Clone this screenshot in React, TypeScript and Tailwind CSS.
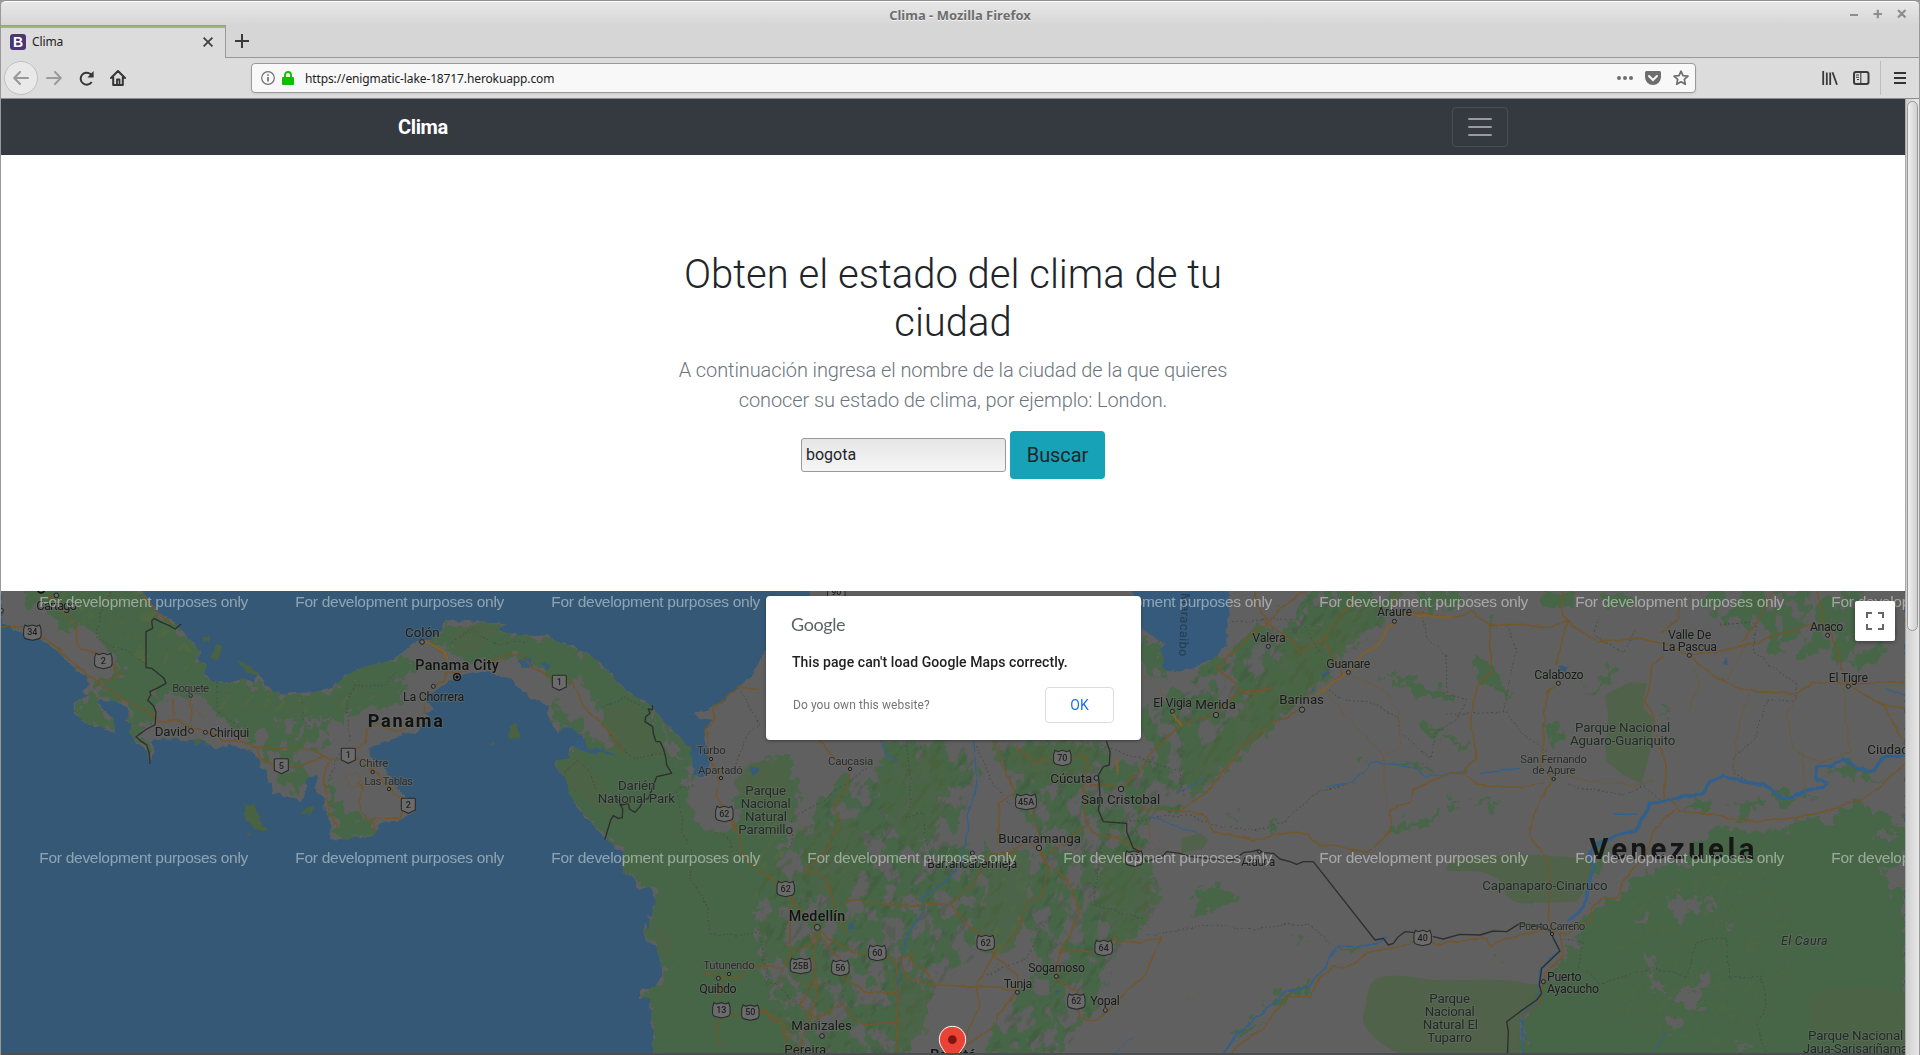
import React from "react";

type Label = [text: string, cx: number, cy: number, width: number, size: number, tone?: "soft" | "bold" | "park" | "italic"];

/* Map units are a third of a pixel; every region has its own local origin. */
const REGION_X = [0, 1200, 2280, 3420, 4560];

const LABELS: Label[][] = [
  [
    ["Cartago", 170, 61, 122, 14],
    ["Boquete", 572, 309, 110, 12, "soft"],
    ["David", 513, 438, 98, 14],
    ["Chiriqui", 688, 442, 120, 13],
    ["Colón", 1267, 141, 104, 14],
    ["Panama City", 1371, 241, 250, 15, "bold"],
    ["La Chorrera", 1301, 334, 184, 13],
    ["Panama", 1216, 407, 226, 19, "bold"],
    ["Chitre", 1121, 534, 88, 12, "soft"],
    ["Las Tablas", 1166, 588, 146, 12, "soft"],
  ],
  [
    ["Turbo", 934, 496, 86, 12, "soft"],
    ["Apartadó", 961, 556, 134, 12, "soft"],
    ["Caucasia", 1352, 528, 136, 12, "soft"],
    ["Darién", 710, 601, 112, 14, "park"],
    ["National Park", 709, 640, 232, 14, "park"],
    ["Parque", 1097, 616, 122, 14, "park"],
    ["Nacional", 1097, 655, 150, 14, "park"],
    ["Natural", 1098, 694, 126, 14, "park"],
    ["Paramillo", 1097, 733, 164, 14, "park"],
    ["Medellín", 1251, 994, 170, 15, "bold"],
    ["Tutunendo", 987, 1140, 154, 12, "soft"],
    ["Quibdo", 954, 1210, 112, 13],
    ["Manizales", 1265, 1321, 182, 14],
    ["Pereira", 1216, 1393, 126, 14],
  ],
  [
    ["Cúcuta", 934, 580, 126, 14],
    ["San Cristobal", 1082, 642, 238, 14],
    ["Bucaramanga", 839, 760, 248, 14],
    ["Barrancabermeja", 637, 835, 270, 13],
    ["Sogamoso", 890, 1147, 170, 13],
    ["Tunja", 774, 1195, 86, 13],
    ["Yopal", 1035, 1248, 88, 13],
    ["Bogotá", 579, 1408, 138, 16, "bold"],
  ],
  [
    ["Araure", 764, 81, 104, 12.5],
    ["Valera", 387, 157, 100, 13],
    ["Guanare", 625, 235, 132, 13],
    ["El Vigia", 98, 352, 116, 13],
    ["Merida", 227, 358, 122, 14],
    ["Barinas", 485, 343, 134, 14],
    ["Arauca", 355, 829, 102, 12.5],
    ["Capanaparo-Cinaruco", 1215, 901, 376, 14, "park"],
    ["Parque", 929, 1240, 122, 14, "park"],
    ["Nacional", 929, 1279, 150, 14, "park"],
    ["Natural El", 931, 1318, 166, 14, "park"],
    ["Tuparro", 929, 1357, 134, 14, "park"],
  ],
  [
    ["Valle De", 509, 148, 130, 13],
    ["La Pascua", 509, 184, 164, 13],
    ["Anaco", 920, 124, 100, 13],
    ["Calabozo", 117, 268, 148, 13],
    ["El Tigre", 985, 277, 118, 13],
    ["Parque Nacional", 308, 427, 286, 14, "park"],
    ["Aguaro-Guariquito", 308, 466, 316, 14, "park"],
    ["San Fernando", 101, 522, 200, 12, "soft"],
    ["de Apure", 102, 555, 130, 12, "soft"],
    ["Ciudad", 1104, 492, 124, 14],
    ["Puerto Carreño", 96, 1023, 200, 12, "soft"],
    ["Puerto", 133, 1174, 104, 13],
    ["Ayacucho", 159, 1210, 156, 13],
    ["El Caura", 853, 1068, 140, 13, "italic"],
    ["Parque Nacional", 1007, 1351, 286, 14, "park"],
    ["Jaua-Sarisariñama", 1006, 1390, 316, 14, "park"],
  ],
];

const TOWNS: [number, number, number?][][] = [
  [[169, 31], [572, 332, 5], [573, 438], [616, 442, 6], [1266, 171], [1300, 304, 6], [1118, 561, 5], [1167, 612, 5], [3, 77, 7]],
  [[933, 522, 5], [963, 579, 5], [1350, 552, 5], [1252, 1027, 9], [987, 1167, 5], [955, 1180, 6], [1266, 1353]],
  [[1009, 579], [1083, 612, 8], [837, 789, 8], [637, 804, 6], [889, 1174, 6], [772, 1222, 6], [1036, 1276, 6]],
  [[763, 109, 6], [385, 184, 6], [625, 262, 6], [97, 379, 6], [228, 390, 8], [486, 374, 8], [358, 800, 5]],
  [[508, 211, 6], [923, 151, 6], [115, 295, 6], [985, 304, 6], [101, 582, 5], [96, 1047, 5], [70, 1190, 6]],
];

const SHIELDS: [string, number, number, "us" | "pa"][][] = [
  [["34", 97, 142, "us"], ["2", 310, 227, "us"], ["1", 1045, 511, "pa"], ["5", 844, 542, "pa"], ["2", 1225, 661, "pa"]],
  [["1", 478, 292, "pa"], ["62", 973, 686, "us"], ["62", 1157, 911, "us"], ["90", 1309, 20, "us"], ["25B", 1202, 1142, "us"], ["56", 1321, 1148, "us"], ["13", 964, 1275, "us"], ["50", 1051, 1282, "us"]],
  [["70", 907, 518, "us"], ["45A", 798, 650, "us"], ["60", 352, 1103, "us"], ["62", 677, 1073, "us"], ["64", 1031, 1088, "us"], ["62", 949, 1249, "us"], ["66", 1122, 820, "us"]],
  [["40", 848, 1058, "us"]],
  [],
];

const LAND =
  "M3,0 L415,0 L475,85 L520,110 L560,150 L600,200 L590,225 L622,240 L610,270 L640,292 L700,290 L730,280 L760,290 L775,270 L790,290 L820,320 L870,328 L930,325 L1000,305 L1040,270 L1090,245 L1160,230 L1210,205 L1240,175 L1265,165 L1290,165 L1320,145 L1335,105 L1360,100 L1370,110 L1400,108 L1440,112 L1520,118 L1490,138 L1560,150 L1640,155 L1700,180 L1760,205 L1820,245 L1850,290 L1890,325 L1930,350 L1955,362 L1990,410 L2030,445 L2060,480 L2075,485 L2075,510 L2085,530 L2080,570 L2110,575 L2130,560 L2130,530 L2120,480 L2110,440 L2140,405 L2100,400 L2080,390 L2130,370 L2170,350 L2220,305 L2250,280 L2280,235 L2295,200 L2400,100 L2440,0 L5715,0 L5715,1420 L1960,1420 L1952,1270 L1950,1240 L1918,1235 L1930,1205 L1965,1205 L1990,1165 L1985,1140 L1965,1080 L1945,1070 L1930,1040 L1932,1020 L1950,1040 L1945,990 L1955,990 L1968,945 L1950,905 L1915,915 L1900,870 L1870,865 L1870,800 L1815,760 L1775,715 L1740,675 L1710,630 L1700,590 L1670,545 L1668,525 L1710,520 L1705,490 L1730,475 L1745,455 L1730,440 L1715,430 L1690,418 L1680,450 L1650,410 L1645,360 L1600,345 L1570,320 L1540,290 L1490,268 L1440,262 L1380,272 L1365,285 L1335,295 L1310,315 L1280,325 L1275,350 L1310,380 L1270,385 L1290,400 L1245,440 L1175,462 L1125,480 L1108,490 L1110,515 L1150,545 L1180,590 L1215,635 L1245,680 L1200,705 L1140,715 L1125,750 L1060,760 L1005,767 L988,750 L995,720 L975,680 L970,640 L945,610 L950,575 L935,572 L915,590 L920,610 L905,652 L880,640 L825,625 L805,590 L800,555 L780,545 L765,505 L720,490 L690,480 L650,490 L600,465 L550,470 L500,460 L460,470 L455,530 L445,535 L440,495 L410,470 L385,440 L400,420 L375,410 L385,395 L380,360 L330,345 L290,350 L305,375 L340,400 L345,440 L300,425 L265,420 L225,385 L225,355 L265,330 L250,320 L270,290 L230,260 L180,205 L130,165 L70,145 L3,122 Z";

/* Regions that are covered by forest from edge to edge. */
const FOREST = [
  "M60,0 L415,0 L475,85 L520,110 L560,150 L600,200 L590,225 L622,240 L640,292 L730,280 L820,320 L930,325 L1000,305 L1090,245 L1210,205 L1240,225 L1210,290 L1195,360 L1080,375 L1030,400 L960,400 L880,405 L820,400 L780,450 L760,480 L720,440 L640,370 L600,330 L470,330 L450,350 L460,400 L400,370 L300,285 L260,290 L330,280 L370,260 L300,160 L230,110 L200,150 L150,90 L90,60 Z",
  "M225,355 L265,330 L300,330 L290,350 L310,380 L340,405 L343,438 L300,425 L265,420 L225,385 Z",
  "M390,290 L460,340 L465,380 L440,420 L420,440 L450,490 L450,525 L440,495 L410,470 L385,440 L400,420 L380,360 L300,345 L290,300 Z",
  "M1290,165 L1335,120 L1440,112 L1520,118 L1490,138 L1640,155 L1760,205 L1850,290 L1955,362 L2030,445 L2075,485 L2085,530 L2050,600 L2065,650 L2160,700 L2200,740 L2210,640 L2220,600 L2260,540 L2340,515 L2370,520 L2380,570 L2400,640 L2350,780 L2310,900 L2260,1000 L2280,1130 L2330,1250 L2410,1420 L1960,1420 L1952,1270 L1918,1235 L1965,1205 L1990,1165 L1965,1080 L1930,1040 L1945,990 L1968,945 L1950,905 L1915,915 L1900,870 L1870,865 L1870,800 L1775,715 L1710,630 L1700,590 L1668,545 L1668,525 L1710,520 L1730,475 L1760,440 L1800,470 L1840,500 L1850,450 L1800,390 L1770,330 L1740,280 L1700,300 L1600,250 L1540,210 L1460,240 L1340,200 Z",
  "M990,590 L1010,640 L1050,690 L1120,705 L1125,750 L1060,760 L1005,767 L988,750 L1010,710 L980,640 Z",
  "M5715,720 L5560,640 L5520,690 L5420,700 L5350,720 L5240,750 L5160,720 L5120,740 L5050,830 L4940,870 L4880,900 L4830,950 L4760,990 L4730,1060 L4680,1150 L4620,1200 L4570,1300 L4565,1420 L5715,1420 L5715,850 Z",
];

/* Mountain country where forest and bare ground alternate. */
const HIGHLANDS = [
  "M2330,1420 L2270,1130 L2260,900 L2380,740 L2460,650 L2500,600 L2640,560 L2640,470 L2880,470 L2930,560 L2890,640 L2860,770 L2980,800 L3000,960 L2940,1080 L2820,1180 L2750,1300 L2700,1420 Z",
  "M2980,470 L3320,470 L3340,540 L3420,540 L3500,620 L3430,700 L3440,820 L3470,920 L3420,1030 L3340,1080 L3300,1240 L3150,1420 L2950,1420 L2990,1300 L3130,1150 L3060,1000 L3110,850 L3100,700 L3020,600 Z",
  "M3440,500 L3400,380 L3500,330 L3600,250 L3700,190 L3780,120 L3880,60 L3940,0 L4200,0 L4170,90 L4030,200 L3900,330 L3800,420 L3690,500 L3600,600 L3500,680 L3420,640 Z",
  "M2660,470 L2820,470 L2880,560 L2820,720 L2760,840 L2680,800 L2620,660 L2660,600 Z",
  "M800,400 L980,395 L1000,470 L900,500 L930,560 L900,620 L820,600 L780,500 Z",
  "M1640,350 L1760,400 L1730,460 L1680,440 Z",
  "M5080,18 L5560,18 L5700,60 L5640,240 L5300,200 L5230,120 L5100,60 Z",
];

const DENSE_RIDGES = [
  "M2930,1050 L2980,820 L3070,780 L3100,900 L3060,1060 L2980,1130 Z",
  "M3300,780 L3440,820 L3475,930 L3420,1030 L3340,1080 L3300,960 Z",
  "M3540,560 L3700,420 L3800,260 L3900,150 L4040,60 L4150,60 L4100,130 L3960,290 L3850,390 L3730,500 L3580,640 Z",
  "M2640,560 L2700,500 L2820,500 L2860,580 L2800,740 L2720,790 L2650,690 Z",
  "M3020,480 L3290,480 L3280,560 L3130,600 L3050,560 Z",
  "M2440,720 L2560,700 L2600,800 L2560,920 L2460,940 L2400,860 Z",
  "M2700,1180 L2800,1220 L2780,1330 L2720,1400 L2660,1380 Z",
];

const PARKS = [
  "M4942,295 L4890,292 L4815,330 L4825,400 L4815,470 L4820,530 L4870,570 L4925,595 L4950,500 L4960,400 L4930,370 L4930,340 Z",
  "M4125,1185 C4160,1160 4240,1178 4300,1185 C4400,1190 4500,1175 4580,1195 L4620,1200 L4600,1260 L4560,1300 L4560,1420 L4240,1420 C4140,1390 4080,1330 4090,1290 C4105,1240 4100,1200 4125,1185 Z",
  "M4340,850 C4350,815 4400,820 4560,808 L4770,820 L4780,860 L4765,900 L4730,950 L4560,955 C4500,940 4520,900 4490,880 C4450,850 4400,860 4340,858 Z",
  "M3545,760 L3600,745 L3625,765 L3610,790 L3545,805 Z",
  "M5430,1230 C5500,1200 5600,1200 5715,1220 L5715,1420 L5480,1360 C5420,1330 5420,1280 5430,1230 Z",
  "M1360,140 L1440,112 L1490,138 L1420,200 L1370,215 Z",
  "M2200,590 L2250,535 L2360,520 L2370,640 L2350,720 L2260,700 Z",
  "M1690,540 L1740,510 L1830,620 L1850,700 L1760,640 L1700,600 Z",
  "M1810,380 L1900,350 L1960,440 L1990,520 L1900,520 L1830,470 Z",
  "M1960,1000 L2010,1050 L2020,1100 L1980,1120 Z",
];

const WATER = [
  "M3395,0 L3685,0 L3690,75 L3680,110 L3682,185 L3625,225 L3580,250 L3525,262 L3495,250 L3490,215 L3480,190 L3495,175 L3460,160 L3420,120 Z",
  "M2070,500 L2100,500 L2135,530 L2128,570 L2085,570 Z",
  "M1555,225 L1590,215 L1600,245 L1570,245 Z M1615,235 L1655,240 L1640,255 Z",
  "M3965,265 L3995,255 L3970,285 Z M3930,305 L3945,320 L3930,320 Z",
  "M4680,235 L4702,245 L4695,265 L4680,255 Z M5165,235 L5182,220 L5178,238 Z",
  "M2545,1012 L2560,1015 L2562,1035 L2547,1035 Z M3162,1215 L3180,1212 L3172,1230 Z",
  "M1720,480 L1745,450 L1760,490 L1800,490 L1860,520 L1800,500 L1750,500 Z",
  "M2250,545 L2280,550 L2258,575 Z",
];

const ISLANDS = [
  "M728,685 L740,660 L762,650 L768,680 L778,695 L770,705 L802,725 L800,735 L765,725 L735,705 Z",
  "M905,685 L925,670 L950,663 L935,678 L910,688 Z",
  "M1525,425 L1550,418 L1555,455 L1530,470 L1522,450 Z",
  "M605,155 L625,155 L628,170 L610,168 Z M650,180 L665,185 L655,225 L635,215 Z",
  "M712,225 L735,235 L770,260 L780,275 L740,262 L715,240 Z",
  "M742,745 L752,745 L747,757 Z M1478,470 L1487,468 L1482,485 Z",
  "M580,462 L600,460 L602,475 L588,482 Z M615,470 L628,475 L620,488 Z",
];

const ROADS = [
  "M3,125 L70,125 L130,160 L190,205 L235,245 L280,280 L350,330 L410,365 L440,370 L475,410 L530,402 L570,425 L640,445 L670,468 L720,468 L770,487 L830,490 L900,487 L950,500 L985,525 L1025,520 L1070,490 L1095,475 L1100,430 L1130,415 L1190,440 L1240,420",
  "M1300,305 L1335,290 L1335,265 L1400,262 M1280,170 L1310,190 L1340,215 M1275,320 L1270,385 M770,487 L780,520 L830,545 L890,547 L930,530 L970,515",
  "M430,30 L475,85 L510,115 M150,30 L185,80 L225,115 L230,170 L250,195 L330,215 L358,270 L330,285 L300,285 M570,340 L575,430 M520,340 L520,390",
  "M1070,520 L1130,565 L1180,625 L1210,640 L1205,700 L1130,700 L1120,712 L1085,680 L1075,650 L1090,615 L1075,590 M1120,712 L1125,745 M985,525 L970,580 L985,680 L1010,725",
  "M1470,232 L1510,210 L1560,210 L1600,250 L1660,278 L1720,292 L1740,330 L1750,365 L1790,400 L1830,440 L1850,475 L1870,505",
  "M2280,312 L2220,303 L2140,370 L2140,410 L2118,430 L2130,520 L2160,560 L2148,635 L2190,700 L2220,760 L2220,800 L2265,850 L2330,890 L2370,930 L2385,960",
  "M2460,465 L2500,520 L2548,550 L2545,610 L2500,660 L2520,710 L2480,800 L2420,850 L2475,875 L2500,960 L2540,1040",
  "M2385,960 L2440,1010 L2480,1060 L2560,1100 L2650,1110 L2690,1130 L2690,1250 L2690,1420",
  "M2240,1137 L2345,1150 L2375,1100 L2430,1080 L2452,1030 M2110,1165 L2220,1180 L2240,1137 M2370,940 L2370,1100",
  "M2452,1050 L2440,1100 L2450,1240 L2430,1300 L2390,1420 M2452,1050 L2520,1120 L2530,1180 L2600,1220 L2690,1220 L2700,1240",
  "M2530,960 L2560,946 L2700,962 L2850,955 L2920,900 L2970,810 L3040,800 L3080,770 L3115,790 L3150,850 L3120,940 L3080,950 L3055,1040 L2980,1110 L2930,1200 M2850,955 L2900,1020 L2960,1060 L2980,1110 L3050,1170 L3052,1220",
  "M2980,470 L2990,500 L3045,620 L3000,650 L2995,780 M3050,480 L3100,530 L3160,520 L3250,510 L3270,540 L3250,600 L3260,720 L3200,770 L3150,800",
  "M3095,670 L3120,780 L3150,850 L3200,880 L3240,980 L3210,1050 L3180,1100 L3165,1180 L3230,1220 L3240,1300 L3290,1310 L3400,1200 L3440,1160 L3485,1055 L3420,1075 L3340,1060 L3290,1100 L3180,1100",
  "M3260,720 L3290,750 L3360,760 L3420,800 M3270,600 L3330,600 L3363,612 L3420,560 L3450,510 L3540,420 L3650,385 L3720,320 L3810,310",
  "M2280,1280 L2340,1300 L2370,1360 M2720,1180 L2820,1200 L2900,1205 L2980,1205 L3050,1222 L2995,1290 L2990,1320 L2900,1380 L2860,1420 M2930,1210 L2940,1260 L2900,1350 L2850,1370",
  "M2440,1180 L2400,1260 L2450,1300 L2520,1260 L2590,1320 L2700,1310 M2730,1120 L2790,1170 L2800,1200 M2720,1180 L2700,1120 L2740,1110",
  "M3540,675 L3620,620 L3680,550 L3730,480 L3800,425 L3905,374 M3420,672 L3540,675 L3610,690 L3640,740 L3760,765 L3870,742 L3930,752 L3960,782 L4010,780 L4100,803 L4130,780 L4170,740 L4172,672 L4230,655 L4240,615 L4350,562 L4390,567 L4430,597 L4500,607 L4560,605 L4630,595",
  "M3805,310 L3740,330 L3700,290 L3650,250 L3740,160 L3800,120 L3870,160 L3900,200 L3970,160 L4000,215 L4030,265 L4000,290 M3800,120 L3850,60 L3920,20 M3760,18 L3800,120 M3970,160 L4030,90 L4070,18",
  "M4183,60 L4190,18 M4240,80 L4360,95 L4420,80 L4470,120 L4560,118 L4640,128 L4700,110 L4790,168 L4920,160 L5000,180 L5070,212",
  "M4470,120 L4475,260 L4430,300 L4420,350 L4415,420 L4430,520 L4410,535 L4390,567 M4700,110 L4680,60 L4690,18",
  "M4700,110 L4670,240 M4675,295 L4640,320 L4630,450 L4625,540 L4655,590 L4620,640 L4585,750 L4640,820 L4650,880 L4645,1000 L4660,1045",
  "M5070,212 L5180,195 L5270,175 L5350,140 L5440,120 M5070,212 L5110,250 L5180,295 L5260,320 L5390,325 L5440,295 L5545,292 L5715,295 M4990,210 L4955,240 L4950,300 L4930,350 L4960,390 L4970,450 L4998,540 L4993,640",
  "M5455,20 L5470,110 L5500,160 L5515,220 L5545,300 L5650,360 L5715,370 M5650,360 L5715,475 M5715,530 L5650,600 L5590,640 L5520,665 L5440,690 L5370,700 L5280,710 L5200,700 L5120,685 L5040,680 L5015,650",
  "M5025,670 L4960,740 L4940,800 L4870,890 L4855,935 L4810,940 L4775,970 L4770,1010 L4700,1045 L4680,1045 L4690,1110 L4640,1160 L4620,1240 L4570,1300",
  "M4680,1035 L4600,1040 L4520,1060 L4470,1085 L4460,1060 L4380,1065 L4320,1080 L4270,1062 L4200,1085 L4110,1100 L4040,1150 L4000,1145 L3960,1180 L3930,1235 L3860,1235 L3790,1330 L3710,1380 L3690,1420",
  "M2165,1190 L2160,1230 M2165,1290 L2145,1330 L2160,1380 M2164,1290 L2250,1290 L2290,1275 L2340,1320 L2380,1420",
  "M4980,140 L5030,110 L5040,60 M5230,170 L5280,90 L5320,18",
];

const SIDE_ROADS = [
  "M3980,320 L4060,420 L4150,510 L4200,490 L4195,380 L4150,310 L4050,270 M4150,510 L4160,670",
  "M5245,325 L5210,460 L5200,580 M5390,330 L5360,390 L5380,490 L5410,520 L5415,620 M5085,250 L5095,300 L5065,380",
  "M5530,310 L5540,420 L5550,500 L5470,530 L5400,510 M5240,175 L5190,270 L5170,290 M4700,570 L4770,590 L4900,600 L4960,590",
  "M3440,680 L3450,760 L3480,800 M3400,320 L3440,270 L3500,340 M560,360 L620,400 M1040,570 L1070,560 L1090,600 L1050,605 Z M2400,1180 L2470,1230",
];

const RIVERS: [string, number][] = [
  ["M5715,510 L5650,515 L5620,560 L5580,555 L5530,525 L5490,545 L5450,545 L5450,585 L5480,595 L5470,610 L5420,615 L5380,640 L5350,640 L5290,600 L5220,588 L5170,575 L5130,590 L5100,630 L5020,640 L4990,650 L4950,655 L4930,690 L4910,735 L4840,755 L4790,780", 10],
  ["M4790,770 L4770,800 L4780,850 L4765,900 L4750,970 L4705,1010", 8],
  ["M2920,430 L2930,600 L2905,690 L2900,780 L2870,860 L2770,940 L2765,990 L2725,1040 L2700,1150 L2690,1260", 4],
  ["M3540,625 L3610,575 M3980,605 L4060,590 L4120,530 L4240,545 L4280,575 L4350,565 L4400,560 M4440,565 L4560,550 M3440,690 L3520,720 L3590,745", 3.5],
  ["M3660,1420 L3710,1350 L3790,1280 L3860,1220 L3930,1205 L3980,1140 L4010,1085 L4100,1085 L4160,1060", 5],
  ["M4660,1060 L4680,1095 L4620,1150 L4615,1240 L4570,1290 L4565,1400 M4560,1300 L4580,1360 M2640,460 L2660,510 L2690,530 M4840,688 L4910,688", 4.5],
  ["M5660,315 L5715,330 M4960,1400 L5000,1345 M3320,1420 L3400,1360", 3],
];

const BORDERS =
  "M543,118 L525,132 L508,122 L480,110 L462,100 L455,108 L458,130 L438,140 L438,248 L455,250 L480,270 L492,280 L498,295 L475,308 L450,320 L452,330 L443,345 L460,362 L468,380 L465,420 L440,432 L408,455 L425,470 L440,480 L448,505 L450,535 " +
  "M1957,362 L1958,374 L1945,372 L1950,385 L1937,395 L1935,410 L1958,425 L1960,445 L1968,470 L1980,470 L1990,490 L1998,520 L2000,540 L2015,565 L1970,575 L1955,615 L1945,640 L1930,645 L1920,665 L1905,682 L1888,672 L1885,655 L1865,660 L1850,640 L1868,672 L1867,698 L1855,700 L1840,692 L1832,705 L1815,762 " +
  "M3320,470 L3330,500 L3328,540 L3310,545 L3295,570 L3298,600 L3300,640 L3295,675 L3310,710 L3380,715 L3380,740 L3400,790 L3420,800 L3440,830 L3490,812 L3500,800 L3540,805 L3570,815 L3640,822 L3700,825 L3732,802 L3755,800 L3775,795 L3790,803 L3820,805 L3840,822 L3870,830 L3890,838 L3910,830 L3940,830 L4125,1065 L4150,1060 L4165,1080 L4180,1075 L4195,1055 L4215,1040 L4270,1045 M4300,1055 L4330,1062 L4380,1048 L4440,1050 L4480,1038 L4520,1040 L4560,1015 L4600,1020 L4650,1035 L4660,1060 L4680,1098 L4625,1150 L4618,1200 L4625,1225 L4610,1245 L4560,1280 L4520,1310 L4525,1340 L4522,1420";

const DOTTED =
  "M330,18 L300,90 L290,160 L380,200 L440,240 M650,290 L655,380 L740,450 M905,330 L910,400 L930,430 M1060,300 L1040,350 L1050,460 L1010,520 L990,580 M1190,260 L1150,300 L1060,300 M1355,170 L1420,130 L1450,160 L1500,180 L1580,168 " +
  "M2080,600 L2030,610 L2050,740 L2075,800 L2070,880 L2120,960 L2130,1050 L2280,1045 L2300,1180 L2400,1260 M1690,560 L1730,525 L1770,560 L1790,620 M1810,370 L1870,335 L1940,370 M1830,450 L1900,520 L2000,505 " +
  "M2200,560 L2240,450 L2280,420 L2225,320 M2150,740 L2190,760 L2195,800 M2720,470 L2735,640 L2720,700 L2770,680 L2780,790 M2600,550 L2480,640 L2380,700 L2370,790 M2930,480 L2980,600 L3030,660 M3330,720 L3440,700 L3560,690 L3640,720 L3770,740 L3860,705 L3900,660 L3960,620 L4060,590 " +
  "M3440,1050 L3520,1040 L3640,1018 L3760,1035 L3860,1018 L3930,1018 L3990,1075 M4270,80 L4280,160 L4340,210 L4340,330 L4400,340 L4370,400 L4310,440 L4290,520 L4200,440 L4195,400 L4110,350 L4030,345 L3980,310 M4340,390 L4520,380 L4560,440 L4640,500 M4520,120 L4550,200 L4510,380 M4800,90 L4780,150 L4870,200 L4910,130 M5160,120 L5270,110 L5260,200 L5390,300 L5380,350 L5300,340 L5270,450 L5200,520 L5205,570 L5250,590 " +
  "M4700,600 L4870,630 L4930,600 L4990,650 M4760,1160 L4800,1195 L4960,1150 L5060,1175 L5090,1070 L5180,1060 L5190,1180 L5280,1170 L5300,1260 L5270,1320 L5300,1420 M4680,1060 L4750,1070 L4740,1150 M3300,480 L3540,560 L3550,640 M3430,1000 L3280,960 L3300,780 M2960,1170 L3080,1120 L3140,1000 M3700,110 L3900,100 L3960,200";

const PATCHES =
  "M4150,270 L4220,275 L4300,310 L4350,315 L4370,345 L4310,350 L4240,325 L4190,300 Z M4400,200 L4460,230 L4500,280 L4540,340 L4490,320 L4450,290 Z M4260,425 L4310,420 L4340,440 L4320,455 L4280,450 Z M4340,460 L4410,480 L4400,490 L4350,475 Z M4070,515 L4110,508 L4095,535 L4075,530 Z M4200,525 L4260,535 L4300,555 L4270,565 Z M3680,700 L3720,690 L3720,705 L3685,708 Z M3810,710 L3840,705 L3835,725 L3812,732 Z M4180,715 L4230,715 L4320,685 L4300,715 L4200,740 L4160,750 Z M4420,655 L4490,640 L4480,670 L4430,660 Z M4340,650 L4390,645 L4370,665 Z M3590,900 L3680,910 L3720,940 L3620,980 L3580,990 Z M3580,940 L3640,945 L3600,970 Z M4470,110 L4475,150 L4480,100 Z M4640,400 L4690,440 L4670,480 L4640,460 Z M4740,315 L4800,310 L4810,260 L4850,235 L4830,290 L4790,320 Z M4990,370 L5010,360 L4990,420 Z M5500,550 L5560,540 L5650,580 L5520,570 Z M5040,660 L5100,640 L5150,650 L5100,680 Z M5310,610 L5400,640 L5460,630 L5350,670 Z M4790,760 L4830,780 L4800,870 L4780,880 Z M4550,930 L4600,925 L4580,960 Z M4490,1110 L4497,1110 L4490,1140 Z M3880,1062 L3930,1065 L3890,1072 Z M3550,1245 L3580,1255 L3560,1255 Z M4000,1080 L4110,1090 L4060,1100 Z M3780,1270 L3860,1215 L3940,1200 L3870,1240 Z M3700,1350 L3780,1300 L3720,1370 Z M5200,650 L5290,640 L5220,720 Z M3430,160 L3480,190 L3510,270 L3440,250 L3390,200 Z M4250,20 L4400,18 L4380,60 L4280,70 Z M4620,20 L4700,18 L4720,60 L4640,70 Z M4800,30 L4880,20 L4900,60 L4830,70 Z";

const CLEARINGS =
  "M4995,930 L5040,925 L5050,960 L5110,935 L5090,990 L5060,970 L5040,1015 Z M4900,1000 L4955,998 L4950,1015 L4900,1010 Z M4940,1150 L4990,1190 L4980,1230 L4940,1190 Z M5020,1230 L5090,1200 L5130,1145 L5120,1230 L5080,1280 L5030,1260 Z M4990,1290 L5050,1300 L5010,1340 Z M5190,1010 L5205,1015 L5205,1035 Z M4940,1100 L4965,1110 L4960,1155 Z M5120,940 L5140,930 L5135,990 Z M5260,720 L5360,710 L5360,740 L5290,735 Z M5440,690 L5510,690 L5480,720 Z M5650,840 L5715,830 L5715,900 L5670,930 Z M5210,1360 L5235,1380 L5225,1400 Z M5640,730 L5690,740 L5670,775 L5640,760 Z M1460,240 L1540,210 L1600,250 L1560,280 L1490,262 Z M1960,400 L2000,450 L2040,500 L2040,530 L2010,500 L1990,460 Z M2060,650 L2150,635 L2190,690 L2180,740 L2110,730 Z M1660,290 L1740,290 L1790,350 L1800,440 L1730,360 L1680,340 Z M1340,180 L1352,215 L1330,240 L1320,210 Z M2340,820 L2400,790 L2390,900 L2350,960 Z M2290,950 L2350,920 L2390,1000 L2370,1080 L2300,1070 Z M2480,1080 L2540,1040 L2570,1090 L2520,1110 Z";

const TONES = { soft: "#2b2b2b", bold: "#131313", park: "#1f2b25", italic: "#222d27" };

function MapLabel({ item }: { item: Label }) {
  const [text, cx, cy, width, size, tone] = item;
  return (
    <text
      x={cx - width / 2}
      y={cy + size * 1.03}
      textLength={width}
      fontSize={size * 2.86}
      fontWeight={tone === "bold" ? (text === "Panama" ? 700 : 500) : 400}
      fontStyle={tone === "italic" ? "italic" : "normal"}
      fill={tone ? TONES[tone] : "#1a1a1a"}
      stroke="#6c6f6c"
      strokeOpacity={0.5}
      strokeWidth={6}
      strokeLinejoin="round"
      paintOrder="stroke"
    >
      {text}
    </text>
  );
}

function Shield({ text, x, y, kind }: { text: string; x: number; y: number; kind: "us" | "pa" }) {
  const w = text.length > 2 ? 32 : 27;
  const d =
    kind === "us"
      ? `M${-w + 5},-22 L${-w / 2},-18 L0,-22 L${w / 2},-18 L${w - 5},-22 C${w - 4},-14 ${w + 1},-12 ${w - 1},-4 C${w - 2},4 ${w + 3},10 ${w - 4},17 C${w - 10},22 12,20 0,24 C-12,20 ${-w + 10},22 ${-w + 4},17 C${-w - 3},10 ${-w + 2},4 ${-w + 1},-4 C${-w - 1},-12 ${-w + 4},-14 ${-w + 5},-22 Z`
      : "M-21,-18 Q-21,-21 -18,-21 L18,-21 Q21,-21 21,-18 L21,14 L0,24 L-21,14 Z";
  return (
    <g transform={`translate(${x} ${y})`}>
      <path d={d} fill="#6b6b6b" stroke="#2a2a2a" strokeWidth={3.2} />
      <text y={9} textAnchor="middle" fontSize={27} fontWeight={500} fill="#222">
        {text}
      </text>
    </g>
  );
}

function Terrain() {
  return (
    <svg viewBox="3 18 5712 1392" className="block h-[464px] w-[1904px]" fontFamily="Roboto, sans-serif" preserveAspectRatio="none">
      <defs>
        <filter id="rough" x="-5%" y="-5%" width="110%" height="110%">
          <feTurbulence type="fractalNoise" baseFrequency="0.035" numOctaves="3" seed="4" result="n" />
          <feDisplacementMap in="SourceGraphic" in2="n" scale="22" xChannelSelector="R" yChannelSelector="G" />
        </filter>
        <filter id="wavy" x="-5%" y="-5%" width="110%" height="110%">
          <feTurbulence type="fractalNoise" baseFrequency="0.025" numOctaves="2" seed="4" result="n" />
          <feDisplacementMap in="SourceGraphic" in2="n" scale="16" xChannelSelector="R" yChannelSelector="G" />
        </filter>
        <filter id="ragged" x="-5%" y="-5%" width="110%" height="110%">
          <feTurbulence type="fractalNoise" baseFrequency="0.03" numOctaves="4" seed="9" result="n" />
          <feDisplacementMap in="SourceGraphic" in2="n" scale="80" xChannelSelector="R" yChannelSelector="G" />
        </filter>
        <filter id="mottle" x="0" y="0" width="100%" height="100%">
          <feTurbulence type="fractalNoise" baseFrequency="0.02 0.015" numOctaves="5" seed="12" result="n" />
          <feColorMatrix in="n" type="matrix" values="0 0 0 0 0  0 0 0 0 0  0 0 0 0 0  16 0 0 0 -7" result="m" />
          <feDisplacementMap in="SourceGraphic" in2="n" scale="100" xChannelSelector="G" yChannelSelector="B" result="s" />
          <feComposite in="s" in2="m" operator="in" />
        </filter>
        <filter id="ridges" x="0" y="0" width="100%" height="100%">
          <feTurbulence type="fractalNoise" baseFrequency="0.02 0.055" numOctaves="3" seed="3" result="n" />
          <feColorMatrix in="n" type="matrix" values="0 0 0 0 0  0 0 0 0 0  0 0 0 0 0  12 0 0 0 -7" result="m" />
          <feComposite in="SourceGraphic" in2="m" operator="in" />
        </filter>
        <clipPath id="land">
          <path d={LAND} />
        </clipPath>
      </defs>
      <rect width="5715" height="1410" fill="#345875" />
      <g filter="url(#rough)">
        <path d={LAND} fill="#616161" />
        {ISLANDS.map((d) => (
          <path key={d} d={d} fill="#4a6342" />
        ))}
      </g>
      <g clipPath="url(#land)">
        <g filter="url(#ragged)" fill="#476546">
          {FOREST.map((d) => (
            <path key={d} d={d} />
          ))}
          <path d={PATCHES} />
        </g>
        <g filter="url(#ragged)" fill="#606160">
          <path d={CLEARINGS} />
        </g>
        <g filter="url(#mottle)" fill="#476546">
          {HIGHLANDS.map((d) => (
            <path key={d} d={d} />
          ))}
        </g>
        <g filter="url(#ragged)" fill="#496545" opacity="0.85">
          {DENSE_RIDGES.map((d) => (
            <path key={d} d={d} />
          ))}
        </g>
        <g fill="#4e6345">
          {PARKS.map((d) => (
            <path key={d} d={d} opacity="0.85" />
          ))}
        </g>
        <g transform="rotate(-55)" filter="url(#ridges)" opacity="0.45">
          <g transform="rotate(55)" fill="#586b3d">
            {DENSE_RIDGES.map((d) => (
              <path key={d} d={d} />
            ))}
            <path d="M80,10 L420,10 L500,120 L580,200 L560,260 L440,240 L300,170 L200,110 Z M640,330 L1160,330 L1180,370 L900,390 L640,370 Z M2260,700 L2420,650 L2400,800 L2330,900 L2280,1100 L2260,900 Z M2280,1050 L2380,1080 L2480,1420 L2330,1420 Z" />
            <path d="M4900,900 L5300,850 L5400,1100 L5200,1400 L4800,1300 Z" opacity="0.4" />
          </g>
        </g>
        <g transform="rotate(-55)" filter="url(#ridges)" opacity="0.3">
          <g transform="rotate(55) translate(14 9)" fill="#3a5539">
            {HIGHLANDS.slice(0, 4).map((d) => (
              <path key={d} d={d} />
            ))}
          </g>
        </g>
      </g>
      <g fill="#345a7c" filter="url(#rough)">
        {WATER.map((d) => (
          <path key={d} d={d} />
        ))}
      </g>
      <g fill="none" strokeLinejoin="round" strokeLinecap="round">
        <path d={DOTTED} stroke="#484848" strokeWidth="2.8" strokeDasharray="5 7" strokeLinecap="butt" filter="url(#wavy)" />
        <g filter="url(#wavy)">
          {RIVERS.map(([d, w]) => (
            <path key={d} d={d} stroke="#33608c" strokeWidth={w} />
          ))}
        </g>
        <g stroke="#6c5a3a" strokeWidth="2.6" filter="url(#wavy)">
          {SIDE_ROADS.map((d) => (
            <path key={d} d={d} />
          ))}
        </g>
        <g stroke="#73562a" strokeWidth="4.4" filter="url(#wavy)">
          {ROADS.map((d) => (
            <path key={d} d={d} />
          ))}
          <path d="M4183,109 L4160,140 L4120,190 L4085,210 L4060,250 L3990,300 L3950,330 M4200,85 L4270,90 L4355,95" stroke="#7a6130" strokeWidth="7" />
          <path d="M1275,172 L1300,182 L1325,195 L1342,220 M3515,380 L3540,420" stroke="#80622b" strokeWidth="7" />
          <path d="M3353,525 L3352,570" stroke="#7a6130" strokeWidth="7" />
        </g>
        <path d={BORDERS} stroke="#2d2f2d" strokeWidth="4" />
      </g>
      <text transform="translate(3544 20) rotate(92)" x={-28} fontSize="38" textLength="222" fill="#263c50">
        e Maracaibo
      </text>
      {REGION_X.map((dx, i) => (
        <g key={dx} transform={`translate(${dx} 0)`}>
          {TOWNS[i].map(([x, y, r = 7]) => (
            <circle key={`${x}-${y}`} cx={x} cy={y} r={r} fill="#6d6d6d" stroke="#1f1f1f" strokeWidth="3" />
          ))}
          {SHIELDS[i].map(([t, x, y, k]) => (
            <Shield key={`${t}-${x}`} text={t} x={x} y={y} kind={k} />
          ))}
          {LABELS[i].map((item) => (
            <MapLabel key={`${item[0]}-${item[2]}-${item[1]}`} item={item} />
          ))}
        </g>
      ))}
      <g fill="none" stroke="#0d0d0d">
        <circle cx="1371" cy="276" r="10" fill="#6d6d6d" strokeWidth="4" />
        <circle cx="1371" cy="276" r="4.5" fill="#0d0d0d" />
        <circle cx="123" cy="14" r="10" strokeWidth="5" />
      </g>
      <text x="4768" y="822" fontSize="88" fontWeight="700" textLength="495" fill="#161616">
        Venezuela
      </text>
      <g fill="#fff" fillOpacity="0.45" fontFamily="'Liberation Sans', sans-serif" fontSize="46.5">
        {[67, 835].map((y) =>
          [0, 1, 2, 3, 4, 5, 6, 7].map((k) => (
            <text key={`${y}-${k}`} x={118 + k * 768} y={y} textLength="627">
              For development purposes only
            </text>
          )),
        )}
      </g>
      <path d="M2857,1324 C2833,1324 2818,1343 2818,1364 C2818,1385 2834,1396 2843,1416 L2871,1416 C2880,1396 2897,1385 2897,1364 C2897,1343 2881,1324 2857,1324 Z" fill="#ea4335" stroke="#fff" strokeWidth="3" />
      <circle cx="2857" cy="1364" r="13" fill="#811411" />
    </svg>
  );
}

function TitleBar() {
  return (
    <div className="relative flex h-[25px] items-center justify-center rounded-t-[5px] border-t border-[#8f8f8f] bg-gradient-to-b from-[#e8e8e8] to-[#d6d6d6] shadow-[inset_0_1px_0_#fff]">
      <span className="mt-[4px] font-['Noto_Sans'] text-[13px] leading-none font-bold text-[#6d6d6d] [text-shadow:0_1px_0_#f4f4f4]">Clima - Mozilla Firefox</span>
      <svg width="60" height="12" viewBox="0 0 60 12" className="absolute top-[7px] right-[10px]" fill="none" stroke="#8e8e8e" strokeWidth="2.2">
        <path d="M1 7h8M24.500 6h8.500M28.800 1.800v8.500M49 2l7.500 7.500M56.500 2l-7.500 7.500" />
      </svg>
    </div>
  );
}

function TabStrip() {
  return (
    <div className="flex h-[33px] bg-[#d6d6d6]">
      <div className="flex w-[225px] items-center border-t border-r border-[#999] bg-[#dcdcdc] shadow-[inset_0_2px_0_#9ab87c]">
        <div className="ml-[9px] grid size-4 place-items-center rounded-[3px] bg-[#4b3573] font-['Liberation_Sans'] text-[14px] leading-none font-bold text-white">B</div>
        <span className="ml-[6px] flex-1 font-['Noto_Sans'] text-[12px] tracking-[-0.1px] text-[#222]">Clima</span>
        <svg width="10" height="10" viewBox="0 0 10 10" className="mr-[12px]" fill="none" stroke="#3c3c3c" strokeWidth="1.700">
          <path d="M.6.6l8.800 8.800M9.400.6L.6 9.400" />
        </svg>
      </div>
      <div className="flex flex-1 items-center border-b border-[#999] pl-[9px]">
        <svg width="14" height="14" viewBox="0 0 14 14" fill="none" stroke="#3a3a3a" strokeWidth="2">
          <path d="M7 0v14M0 7h14" />
        </svg>
      </div>
    </div>
  );
}

function AddressBar() {
  return (
    <div className="flex h-[30px] w-[1445px] items-center rounded-[4px] border border-[#999] bg-[#f8f8f8] pr-[6px] pl-[9px] shadow-[0_1px_2px_#00000014]">
      <svg width="14" height="14" viewBox="0 0 14 14" fill="none" stroke="#6f6f6f">
        <circle cx="7" cy="7" r="6.300" strokeWidth="1.200" />
        <path d="M7 6v4.500M7 3.200v1.500" strokeWidth="1.700" />
      </svg>
      <svg width="12" height="14" viewBox="0 0 12 14" className="ml-[7px]">
        <path d="M3 7V4a3 3 0 0 1 6 0v3" fill="none" stroke="#12bc00" strokeWidth="1.900" />
        <rect y="6" width="12" height="8" rx="1" fill="#12bc00" />
      </svg>
      <span className="mt-px ml-[11px] flex-1 font-['Noto_Sans'] text-[12px] tracking-[-0.12px] text-[#222]">https://enigmatic-lake-18717.herokuapp.com</span>
      <svg width="16" height="4" viewBox="0 0 16 4" fill="#6e6e6e">
        <circle cx="2" cy="2" r="2" />
        <circle cx="8" cy="2" r="2" />
        <circle cx="14" cy="2" r="2" />
      </svg>
      <svg width="16" height="14" viewBox="0 0 16 14" className="ml-[12px]">
        <path d="M1.500 0h13A1.500 1.500 0 0 1 16 1.500V6A8 8 0 0 1 0 6V1.500A1.500 1.500 0 0 1 1.500 0z" fill="#6e6e6e" />
        <path d="M4 5l4 4 4-4" fill="none" stroke="#f8f8f8" strokeWidth="2" strokeLinecap="round" />
      </svg>
      <svg width="16" height="16" viewBox="0 0 16 16" className="ml-[12px]" fill="none" stroke="#6e6e6e" strokeWidth="1.700" strokeLinejoin="round">
        <path d="M8 1.200l2 4.500 5 .5-3.700 3.200 1 4.900L8 11.800l-4.300 2.500 1-4.900L1 6.200l5-.5z" />
      </svg>
    </div>
  );
}

function Toolbar() {
  return (
    <div className="flex h-[41px] items-center border-b border-[#8c8c8c] bg-[#dcdcdc]">
      <div className="ml-[3px] grid size-[34px] place-items-center rounded-full border border-[#c0c0c0] bg-[#e9e9e9]">
        <svg width="16" height="14" viewBox="0 0 16 14" fill="none" stroke="#999" strokeWidth="2" strokeLinecap="round" strokeLinejoin="round">
          <path d="M15 7H1.200M7 1L1.200 7 7 13" />
        </svg>
      </div>
      <svg width="16" height="14" viewBox="0 0 16 14" className="ml-[8px]" fill="none" stroke="#9b9b9b" strokeWidth="2" strokeLinecap="round" strokeLinejoin="round">
        <path d="M1 7h13.800M9 1l5.800 6L9 13" />
      </svg>
      <svg width="16" height="15" viewBox="0 0 16 15" className="ml-[17px]" fill="none" stroke="#353535" strokeWidth="2">
        <path d="M12.700 11A6 6 0 1 1 11.500 3l1.500 1.500" />
        <path d="M14.600 0v6.500H8.400z" fill="#353535" stroke="none" />
      </svg>
      <svg width="16" height="16" viewBox="0 0 16 16" className="ml-[15px]" fill="none" stroke="#353535" strokeWidth="2" strokeLinejoin="round" strokeLinecap="round">
        <path d="M1 8l7-7 7 7M3.200 7.500V15h9.600V7.500" />
        <path d="M7 14.500V9.500h2.500v5" strokeWidth="1.800" />
      </svg>
      <div className="ml-[125px]">
        <AddressBar />
      </div>
      <svg width="16" height="14" viewBox="0 0 16 14" className="ml-[126px]" fill="none" stroke="#3a3a3a" strokeWidth="1.800">
        <path d="M1.200 0v14M4.800 1.500V14M8.200 1.500V14M10.500 1.300L15 13.700" />
      </svg>
      <svg width="17" height="14" viewBox="0 0 17 14" className="ml-[15px]" fill="none" stroke="#3a3a3a">
        <rect x="1" y="1" width="14.500" height="12" rx="2" strokeWidth="2" />
        <path d="M7.800 1v12M3 4h3M3 6.300h3M4 8.500h2" strokeWidth="1.100" />
      </svg>
      <div className="ml-[10px] h-[34px] w-px bg-[#bdbdbd]" />
      <svg width="12" height="12" viewBox="0 0 12 12" className="ml-[13px]" fill="none" stroke="#333" strokeWidth="2">
        <path d="M0 1h12M0 6h12M0 11h12" />
      </svg>
    </div>
  );
}

function MapError() {
  return (
    <div className="absolute top-[5px] left-[765px] flex h-[144px] w-[375px] flex-col rounded-[4px] bg-white pr-[27px] pl-[26px] shadow-[0_1px_3px_#0006]">
      <span className="mt-[16px] ml-[-1px] font-['Lato'] text-[18px] leading-[24px] tracking-[-0.4px] text-[#5f6368]">Google</span>
      <span className="mt-[18px] text-[14px] leading-[16px] font-medium tracking-[0.09px] text-[#212121]">This page can't load Google Maps correctly.</span>
      <div className="mt-[17px] flex items-center justify-between">
        <span className="pl-px text-[12px] tracking-[0.07px] text-[#757575]">Do you own this website?</span>
        <button className="h-[36px] w-[69px] rounded-[4px] border border-[#dadce0] text-[14px] text-[#1a73e8]">OK</button>
      </div>
    </div>
  );
}

export default function App() {
  return (
    <div className="flex h-[1055px] w-[1920px] flex-col overflow-hidden bg-[#999] font-['Roboto',sans-serif]">
      <div className="mx-px flex flex-1 flex-col">
        <TitleBar />
        <TabStrip />
        <Toolbar />
        <div className="flex flex-1">
          <main className="flex w-[1904px] flex-col bg-white">
            <nav className="flex h-[56px] items-center justify-between bg-[#353a41] px-[397px]">
              <span className="text-[20px] font-bold tracking-[-0.35px] text-white">Clima</span>
              <div className="grid h-[40px] w-[56px] place-items-center rounded-[4px] border border-[#494e54]">
                <svg width="24" height="18" viewBox="0 0 24 18" fill="none" stroke="#999c9f" strokeWidth="2" strokeLinecap="round">
                  <path d="M1 1h22M1 9h22M1 17h22" />
                </svg>
              </div>
            </nav>
            <section className="flex h-[436px] flex-col items-center pt-[96px]">
              <h1 className="w-[555px] text-center text-[40px] leading-[48px] font-light text-[#212529]">Obten el estado del clima de tu ciudad</h1>
              <p className="mt-2 w-[555px] text-center text-[20px] leading-[30px] font-light tracking-[-0.1px] text-[#6c757d]">
                A continuación ingresa el nombre de la ciudad de la que quieres conocer su estado de clima, por ejemplo: London.
              </p>
              <div className="mt-4 flex h-[48px] items-center gap-[4px]">
                <div className="flex h-[34px] w-[205px] items-center rounded-[3px] border border-[#999] bg-gradient-to-b from-[#e6e6e6] to-[#f6f6f6] pl-[4px] text-[16px] text-[#212529]">bogota</div>
                <button className="h-[48px] w-[95px] rounded-[4px] bg-[#17a2b8] text-[20px] tracking-[-0.1px] text-[#212529]">Buscar</button>
              </div>
            </section>
            <section className="relative h-[464px] overflow-hidden">
              <Terrain />
              <MapError />
              <div className="absolute top-[10px] right-[10px] grid size-[40px] place-items-center rounded-[2px] bg-white shadow-[0_1px_4px_#0006]">
                <svg width="18" height="18" viewBox="0 0 18 18" fill="none" stroke="#666" strokeWidth="2">
                  <path d="M1 6V1h5M12 1h5v5M17 12v5h-5M6 17H1v-5" />
                </svg>
              </div>
              <div className="absolute inset-x-0 bottom-0 h-[2px] bg-[#4b4f50]" />
            </section>
          </main>
          <div className="flex flex-1 justify-center border-l border-[#aaa] bg-gradient-to-r from-[#cfcfcf] to-[#e8e8e8] pt-[2px]">
            <div className="h-[530px] w-[11px] rounded-full border border-[#999] bg-gradient-to-r from-[#f0f0f0] to-[#cfcfcf]" />
          </div>
        </div>
      </div>
    </div>
  );
}
